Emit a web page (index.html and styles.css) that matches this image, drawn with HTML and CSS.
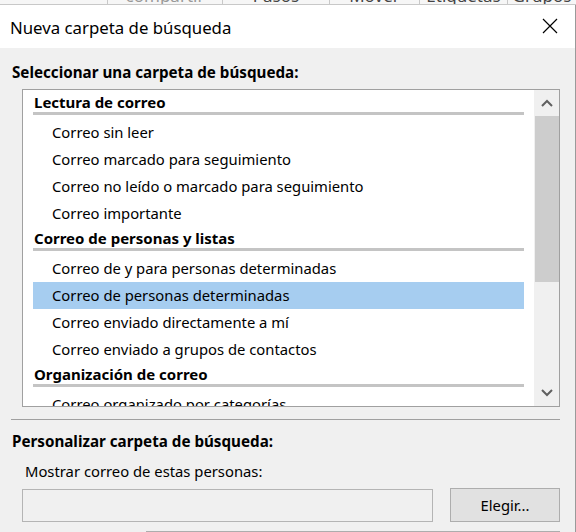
FILE: index.html
```html
<!DOCTYPE html>
<html lang="es">
<head>
  <meta charset="UTF-8">
  <title>Nueva carpeta de búsqueda</title>
  <link rel="stylesheet" href="styles.css">
</head>
<body>

  <div class="ribbon">
    <span class="tab tab-first"></span>
    <span class="tab tab-dim">compartir</span>
    <span class="tab">Pasos</span>
    <span class="tab">Mover</span>
    <span class="tab">Etiquetas</span>
    <span class="tab tab-last">Grupos</span>
  </div>

  <div class="dialog">
    <div class="titlebar">
      <span class="title">Nueva carpeta de búsqueda</span>
      <svg class="close" width="16" height="16" viewBox="0 0 16 16">
        <path d="M1 1 L15 15 M15 1 L1 15" stroke="#000" stroke-width="1.2" fill="none"/>
      </svg>
    </div>

    <div class="content">
      <div class="label-bold">Seleccionar una carpeta de búsqueda:</div>

      <div class="listbox">
        <div class="list">
          <div class="group">Lectura de correo</div>
          <div class="item">Correo sin leer</div>
          <div class="item">Correo marcado para seguimiento</div>
          <div class="item">Correo no leído o marcado para seguimiento</div>
          <div class="item">Correo importante</div>

          <div class="group">Correo de personas y listas</div>
          <div class="item">Correo de y para personas determinadas</div>
          <div class="item selected">Correo de personas determinadas</div>
          <div class="item">Correo enviado directamente a mí</div>
          <div class="item">Correo enviado a grupos de contactos</div>

          <div class="group">Organización de correo</div>
          <div class="item">Correo organizado por categorías</div>
          <div class="item">Correo grande</div>
        </div>

        <div class="scrollbar">
          <div class="arrow">
            <svg width="12" height="8" viewBox="0 0 12 8">
              <polyline points="1,7 6,2 11,7" stroke="#606060" stroke-width="2" fill="none"/>
            </svg>
          </div>
          <div class="thumb"></div>
          <div class="track"></div>
          <div class="arrow">
            <svg width="12" height="8" viewBox="0 0 12 8">
              <polyline points="1,1 6,6 11,1" stroke="#606060" stroke-width="2" fill="none"/>
            </svg>
          </div>
        </div>
      </div>

      <div class="separator"></div>

      <div class="label-bold">Personalizar carpeta de búsqueda:</div>
      <div class="label">Mostrar correo de estas personas:</div>

      <div class="pick-row">
        <div class="textbox"></div>
        <button class="btn">Elegir...</button>
      </div>

      <div class="footer-edge"></div>
    </div>
  </div>

</body>
</html>
```

FILE: styles.css
```css
body {
  margin: 0;
  background-color: #ffffff;
  font-family: "Noto Sans", "Open Sans", sans-serif;
  color: #000;
  overflow: hidden;
}

.ribbon {
  display: flex;
  height: 4px;
  overflow: hidden;
  background-color: #f6f6f6;
  border-bottom: 1px solid #c8c8c8;
  font-size: 17px;
  line-height: 16px;
}

.tab {
  display: flex;
  justify-content: center;
  margin-top: -12px;
  height: 16px;
  border-right: 1px solid #c8c8c8;
  color: #444;
}

.tab-first { width: 107px; }
.tab-dim { width: 114px; color: #999; }
.tab:nth-child(3) { width: 106px; }
.tab:nth-child(4) { width: 89px; }
.tab:nth-child(5) { width: 87px; }
.tab-last { width: 68px; border-right: none; }

.dialog {
  width: 575px;
  border-right: 1px solid #9a9a9a;
  background-color: #f0f0f0;
}

.titlebar {
  display: flex;
  align-items: center;
  justify-content: space-between;
  height: 43px;
  padding: 0 17px 0 10px;
  background-color: #fff;
}

.title {
  font-size: 16.8px;
  padding-top: 2px;
}

.close {
  margin-bottom: 2px;
}

.content {
  padding: 14px 15px 0 12px;
  font-size: 14.8px;
}

.label-bold {
  font-weight: bold;
  font-size: 15.2px;
  line-height: 20px;
}

.listbox {
  display: flex;
  margin: 7px 0 0 10px;
  height: 316px;
  border: 1px solid #a0a0a0;
  background-color: #fff;
  overflow: hidden;
}

.list {
  flex: 1;
  padding: 1px 10px 0 10px;
}

.group {
  font-weight: bold;
  font-size: 15px;
  line-height: 20px;
  padding: 1px 0 0 1px;
  border-bottom: 3px solid #c4c4c4;
  margin-bottom: 4px;
}

.item {
  height: 27px;
  line-height: 27px;
  padding-left: 19px;
}

.selected {
  background-color: #a6cdf0;
}

.scrollbar {
  display: flex;
  flex-direction: column;
  width: 24px;
  background-color: #f0f0f0;
  border-left: 1px solid #f0f0f0;
}

.arrow {
  display: flex;
  align-items: center;
  justify-content: center;
  height: 26px;
}

.thumb {
  height: 166px;
  background-color: #cdcdcd;
}

.track {
  flex: 1;
}

.separator {
  height: 1px;
  margin: 12px 0 11px -1px;
  background-color: #a0a0a0;
}

.label {
  padding-left: 13px;
  margin-top: 10px;
  line-height: 20px;
}

.pick-row {
  display: flex;
  justify-content: space-between;
  align-items: center;
  margin: 7px 0 0 10px;
}

.textbox {
  width: 409px;
  height: 31px;
  border: 1px solid #b4b4b4;
  background-color: #f0f0f0;
}

.btn {
  width: 110px;
  height: 34px;
  border: 1px solid #adadad;
  background-color: #e1e1e1;
  font-family: "Noto Sans", "Open Sans", sans-serif;
  font-size: 14.8px;
  color: #000;
  padding: 0;
}

.footer-edge {
  height: 1px;
  margin: 9px 0 0 134px;
  background-color: #adadad;
}
```
